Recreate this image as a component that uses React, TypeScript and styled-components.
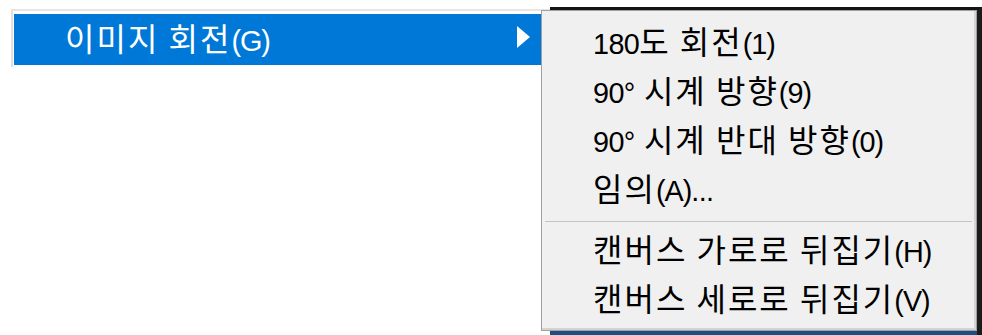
import React from "react";
import styled, { createGlobalStyle } from "styled-components";

const Global = createGlobalStyle`
  html, body { margin: 0; padding: 0; background: #ffffff; }
  body { font-family: "Noto Sans CJK KR", "Noto Sans", sans-serif; }
`;

const Stage = styled.div`
  position: relative;
  width: 982px;
  height: 335px;
  overflow: hidden;
  background: #ffffff;
`;

const ParentMenu = styled.div`
  margin: 9px 0 0 11px;
  width: 540px;
  height: 58px;
  border-top: 2px solid #e6e6e6;
  border-left: 2px solid #e0e0e0;
  padding: 3px 0 0 1px;
  box-sizing: border-box;
  background: #ffffff;
`;

const ParentItem = styled.div`
  display: flex;
  align-items: center;
  justify-content: space-between;
  height: 51px;
  padding: 0 21px 6px 51px;
  background: #0078d7;
  color: #ffffff;
  font-size: 32px;
  box-sizing: border-box;
`;

const Label = styled.span`
  white-space: nowrap;
  display: inline-flex;
  align-items: baseline;
`;

const Hangul = styled.span`
  letter-spacing: 2px;
  white-space: pre;
`;

const Latin = styled.span<{ $key?: boolean }>`
  font-family: "Liberation Sans", "Noto Sans", sans-serif;
  font-size: 0.9em;
  letter-spacing: ${(p) => (p.$key ? "-1px" : "-0.6px")};
  white-space: pre;
`;

const BackWindow = styled.div`
  position: absolute;
  left: 550px;
  top: 7px;
  width: 432px;
  height: 330px;
  background: #1d4e80;
  border-top: 3px solid #141414;
  border-right: 5px solid #1b1b1b;
  box-sizing: border-box;
`;

const SubMenu = styled.div`
  position: absolute;
  left: 541px;
  top: 10px;
  width: 436px;
  height: 321px;
  background: #f0f0f0;
  border: 1px solid #a0a0a0;
  box-shadow: inset -2px -2px 0 #d4d4d4;
  box-sizing: border-box;
  padding: 8px 0 5px 0;
  display: flex;
  flex-direction: column;
`;

const Item = styled.div`
  height: 49px;
  display: flex;
  align-items: center;
  padding: 0 0 8px 51px;
  box-sizing: border-box;
  font-size: 32px;
  color: #000000;
  white-space: nowrap;
`;

const Separator = styled.div`
  height: 2px;
  margin: 6px 4px 5px 3px;
  background: #c4c4c4;
`;

const Arrow = () => (
  <svg width="13" height="22" viewBox="0 0 13 22">
    <polygon points="0,0 13,11 0,22" fill="#ffffff" />
  </svg>
);

const Text = ({ text, mnemonic, tail }: { text: string; mnemonic: string; tail?: string }) => {
  const parts = text.match(/[\uAC00-\uD7A3 ]+|[^\uAC00-\uD7A3 ]+/g) || [];
  return (
    <Label>
      {parts.map((p, i) =>
        /[\uAC00-\uD7A3 ]/.test(p) && !/[0-9°]/.test(p) ? (
          <Hangul key={i}>{p}</Hangul>
        ) : (
          <Latin key={i}>{p}</Latin>
        )
      )}
      <Latin $key>{mnemonic}</Latin>
      {tail && <Latin>{tail}</Latin>}
    </Label>
  );
};

type Entry = { text: string; key: string; tail?: string } | "sep";

const entries: Entry[] = [
  { text: "180도 회전", key: "(1)" },
  { text: "90° 시계 방향", key: "(9)" },
  { text: "90° 시계 반대 방향", key: "(0)" },
  { text: "임의", key: "(A)", tail: "..." },
  "sep",
  { text: "캔버스 가로로 뒤집기", key: "(H)" },
  { text: "캔버스 세로로 뒤집기", key: "(V)" },
];

export default function App() {
  return (
    <Stage>
      <Global />
      <ParentMenu>
        <ParentItem>
          <Text text="이미지 회전" mnemonic="(G)" />
          <Arrow />
        </ParentItem>
      </ParentMenu>
      <BackWindow />
      <SubMenu>
        {entries.map((e, i) =>
          e === "sep" ? (
            <Separator key={i} />
          ) : (
            <Item key={i}>
              <Text text={e.text} mnemonic={e.key} tail={e.tail} />
            </Item>
          )
        )}
      </SubMenu>
    </Stage>
  );
}
